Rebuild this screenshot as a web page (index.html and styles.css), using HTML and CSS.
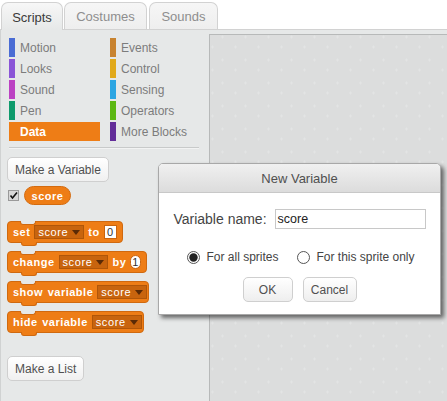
FILE: index.html
```html
<!DOCTYPE html>
<html>
<head>
<meta charset="utf-8">
<link rel="stylesheet" href="styles.css">
</head>
<body>
<div class="tabs">
  <div class="tab tab-scripts active">Scripts</div>
  <div class="tab tab-costumes">Costumes</div>
  <div class="tab tab-sounds">Sounds</div>
</div>
<div class="main">
  <div class="palette">
    <div class="cats">
      <div class="cat"><span class="bar" style="background:#4a6cd4"></span>Motion</div>
      <div class="cat"><span class="bar" style="background:#c88330"></span>Events</div>
      <div class="cat"><span class="bar" style="background:#8a55d7"></span>Looks</div>
      <div class="cat"><span class="bar" style="background:#e1a91a"></span>Control</div>
      <div class="cat"><span class="bar" style="background:#bb42c3"></span>Sound</div>
      <div class="cat"><span class="bar" style="background:#2ca5e2"></span>Sensing</div>
      <div class="cat"><span class="bar" style="background:#0e9a6c"></span>Pen</div>
      <div class="cat"><span class="bar" style="background:#5cb712"></span>Operators</div>
      <div class="cat selected"><span class="bar" style="background:#ee7d16"></span>Data</div>
      <div class="cat"><span class="bar" style="background:#632d99"></span>More Blocks</div>
    </div>
    <div class="sep"></div>
    <div class="blocks">
      <div class="btn">Make a Variable</div>
      <div class="var-row">
        <svg class="check" width="11" height="11" viewBox="0 0 11 11">
          <rect x="0.5" y="0.5" width="10" height="10" fill="#d8d8d8" stroke="#9a9a9a"/>
          <path d="M2.5 5.5 L4.5 8 L9 2.5" fill="none" stroke="#111" stroke-width="1.6"/>
        </svg>
        <div class="reporter">score</div>
      </div>
      <div class="block b-set"><span>set</span><span class="dd">score<i class="tri"></i></span><span>to</span><span class="num">0</span></div>
      <div class="block b-change"><span>change</span><span class="dd">score<i class="tri"></i></span><span>by</span><span class="num round">1</span></div>
      <div class="block b-show"><span>show variable</span><span class="dd">score<i class="tri"></i></span></div>
      <div class="block b-hide"><span>hide variable</span><span class="dd">score<i class="tri"></i></span></div>
      <div class="btn btn-list">Make a List</div>
    </div>
  </div>
  <div class="scripts">
    <svg class="grid" width="100%" height="100%">
      <defs>
        <pattern id="plus" x="0" y="0" width="23" height="23" patternUnits="userSpaceOnUse">
          <path d="M11 2 h3 M12.5 0.5 v3" stroke="#e3e4e4" stroke-width="1"/>
          <path d="M1 12 h3 M2.5 10.5 v3" stroke="#e3e4e4" stroke-width="1"/>
        </pattern>
      </defs>
      <rect width="100%" height="100%" fill="url(#plus)"/>
    </svg>
  </div>
</div>

<div class="dialog">
  <div class="dlg-head">New Variable</div>
  <div class="dlg-body">
    <div class="name-row">
      <span class="lbl">Variable name:</span>
      <span class="input">score</span>
    </div>
    <div class="radio-row">
      <span class="radio">
        <svg width="13" height="13" viewBox="0 0 13 13">
          <circle cx="6.5" cy="6.5" r="6" fill="#fff" stroke="#555"/>
          <circle cx="6.5" cy="6.5" r="4.2" fill="#222"/>
        </svg>
        For all sprites
      </span>
      <span class="radio">
        <svg width="13" height="13" viewBox="0 0 13 13">
          <circle cx="6.5" cy="6.5" r="6" fill="#fff" stroke="#555"/>
        </svg>
        For this sprite only
      </span>
    </div>
    <div class="btn-row">
      <div class="dbtn ok">OK</div>
      <div class="dbtn cancel">Cancel</div>
    </div>
  </div>
</div>
</body>
</html>
```
FILE: styles.css
```css
html, body {
  margin: 0;
  padding: 0;
  background: #fff;
  font-family: "Liberation Sans", Arial, sans-serif;
  width: 447px;
  height: 401px;
  overflow: hidden;
  position: relative;
}

.tabs {
  display: flex;
  align-items: flex-end;
  height: 29px;
  padding-left: 1px;
  gap: 1px;
  box-sizing: border-box;
}

.tab {
  height: 27px;
  box-sizing: border-box;
  border: 1px solid #d2d2d2;
  border-bottom: none;
  border-radius: 7px 7px 0 0;
  background: linear-gradient(#f6f6f6, #eeeeee);
  color: #8e8e8e;
  font-size: 13px;
  display: flex;
  align-items: center;
  justify-content: center;
  padding-top: 1px;
}

.tab.active {
  background: linear-gradient(#f7f7f7, #e6e8e8);
  color: #3a3a3a;
  height: 28px;
  margin-bottom: -1px;
  position: relative;
  z-index: 1;
}

.tab-scripts { width: 62px; }
.tab-costumes { width: 83px; }
.tab-sounds { width: 69px; margin-left: 1px; }

.main {
  display: flex;
  border-top: 1px solid #d2d2d2;
  background: #e6e8e8;
  height: 372px;
}

.palette {
  width: 209px;
  flex: none;
  border-left: 1px solid #d0d2d2;
  box-sizing: border-box;
}

.cats {
  display: grid;
  grid-template-columns: 101px 100px;
  grid-auto-rows: 21px;
  padding: 8px 0 0 8px;
}

.cat {
  display: flex;
  align-items: center;
  height: 19px;
  font-size: 12px;
  color: #7c7c7c;
  gap: 5px;
}

.cat .bar {
  width: 6px;
  height: 19px;
  flex: none;
}

.cat.selected {
  background: #ee7d16;
  color: #fff;
  font-weight: bold;
  width: 91px;
}

.sep {
  margin: 4px 0 0 8px;
  width: 190px;
  height: 1px;
  background: #c8caca;
  border-bottom: 1px solid #f2f3f3;
}

.blocks {
  display: flex;
  flex-direction: column;
  align-items: flex-start;
  padding-left: 6px;
  padding-top: 8px;
}

.btn {
  height: 25px;
  box-sizing: border-box;
  padding: 0 7px;
  border: 1px solid #cfcfcf;
  border-radius: 5px;
  background: linear-gradient(#ffffff, #f0f0f0);
  color: #505050;
  font-size: 12px;
  display: flex;
  align-items: center;
}

.btn-list { margin-top: 23px; }

.var-row {
  display: flex;
  align-items: center;
  margin-top: 4px;
  gap: 5px;
  padding-left: 1px;
}

.check { display: block; }

.reporter {
  width: 47px;
  height: 19px;
  box-sizing: border-box;
  border-radius: 10px;
  background: #ee7d16;
  border: 1px solid #d46b0f;
  color: #fff;
  font-weight: bold;
  font-size: 11px;
  letter-spacing: 0.5px;
  display: flex;
  align-items: center;
  justify-content: center;
}

.block {
  position: relative;
  display: flex;
  align-items: center;
  gap: 4px;
  height: 22px;
  box-sizing: border-box;
  padding: 0 5px 0 5px;
  background: #ee7d16;
  border: 1px solid #d0690f;
  border-radius: 4px;
  color: #fff;
  font-weight: bold;
  font-size: 11px;
  letter-spacing: 0.5px;
  word-spacing: 1px;
  margin-top: 8px;
  white-space: nowrap;
}

.block::before {
  content: "";
  position: absolute;
  left: 12px;
  top: -1px;
  width: 14px;
  height: 3px;
  background: #e6e8e8;
  border-radius: 0 0 3px 3px;
  border: 1px solid #d0690f;
  border-top: none;
}

.block::after {
  content: "";
  position: absolute;
  left: 13px;
  bottom: -4px;
  width: 14px;
  height: 3px;
  background: #ee7d16;
  border-radius: 0 0 3px 3px;
  border: 1px solid #d0690f;
  border-top: none;
}

.b-set { margin-top: 16px; width: 116px; }
.b-change { width: 140px; }
.b-show { width: 142px; }
.b-hide { width: 137px; }

.dd {
  display: flex;
  align-items: center;
  gap: 4px;
  height: 14px;
  box-sizing: border-box;
  padding: 0 3px 0 3px;
  background: #c8640e;
  border: 1px solid #b05609;
  font-weight: normal;
  font-size: 11px;
  letter-spacing: 0.6px;
}

.tri {
  width: 0;
  height: 0;
  border-left: 4px solid transparent;
  border-right: 4px solid transparent;
  border-top: 5px solid #5a2a06;
}

.num {
  width: 15px;
  height: 14px;
  background: #fff;
  color: #333;
  font-weight: normal;
  font-size: 11px;
  display: flex;
  align-items: center;
  justify-content: center;
  box-sizing: border-box;
  border: 1px solid #c9640e;
}

.num.round {
  width: 17px;
  border-radius: 7px;
}

.scripts {
  flex: 1;
  margin-top: 4px;
  border-top: 1px solid #b7b9b9;
  border-left: 1px solid #b7b9b9;
  background: #dcdddd;
}

.grid { display: block; }

.dialog {
  position: absolute;
  left: 158px;
  top: 163px;
  width: 283px;
  height: 152px;
  box-sizing: border-box;
  border: 1px solid #a8a8a8;
  border-radius: 5px 5px 0 0;
  background: #fff;
  box-shadow: 3px 3px 4px rgba(0, 0, 0, 0.55);
}

.dlg-head {
  height: 29px;
  box-sizing: border-box;
  border-bottom: 1px solid #c8c8c8;
  border-radius: 4px 4px 0 0;
  background: linear-gradient(#f0f0f0, #dcdcdc);
  color: #505050;
  font-size: 13px;
  display: flex;
  align-items: center;
  justify-content: center;
  padding-top: 1px;
}

.dlg-body {
  display: flex;
  flex-direction: column;
  align-items: center;
}

.name-row {
  display: flex;
  align-items: center;
  gap: 8px;
  margin-top: 16px;
}

.lbl {
  font-size: 14px;
  color: #444;
}

.input {
  width: 151px;
  height: 20px;
  box-sizing: border-box;
  border: 1px solid #c8c8c8;
  font-size: 12.5px;
  color: #222;
  padding-left: 2px;
  display: flex;
  align-items: center;
}

.radio-row {
  display: flex;
  align-items: center;
  gap: 19px;
  margin-top: 21px;
  font-size: 12px;
  color: #444;
  margin-left: 3px;
}

.radio {
  display: flex;
  align-items: center;
  gap: 6px;
}

.radio svg { display: block; }

.btn-row {
  display: flex;
  gap: 10px;
  margin-top: 13px;
}

.dbtn {
  height: 25px;
  box-sizing: border-box;
  border: 1px solid #cfcfcf;
  border-radius: 5px;
  background: linear-gradient(#ffffff, #eeeeee);
  color: #505050;
  font-size: 12px;
  display: flex;
  align-items: center;
  justify-content: center;
}

.ok { width: 50px; }
.cancel { width: 54px; }
```
